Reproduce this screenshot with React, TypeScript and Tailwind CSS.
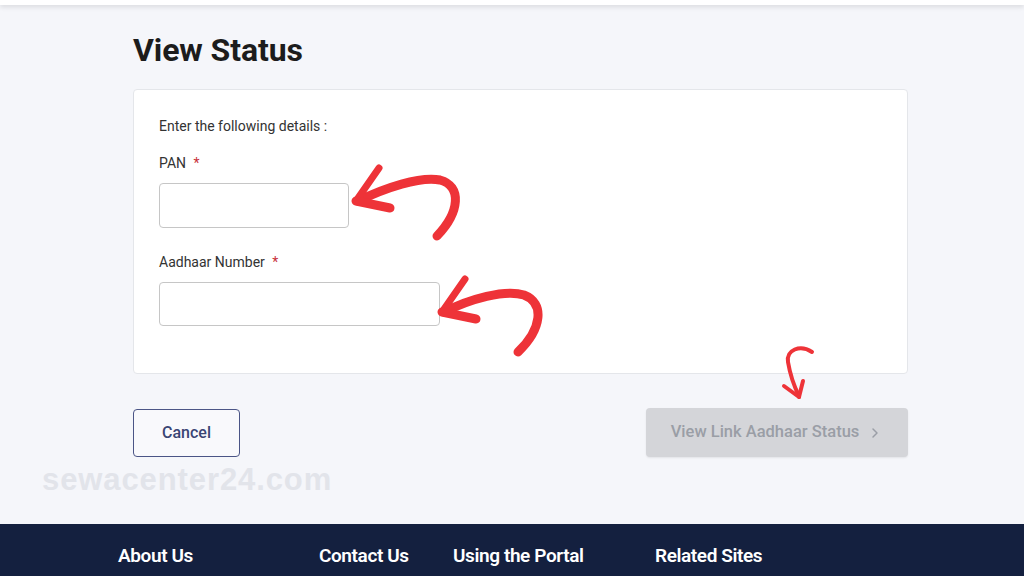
import React from 'react';
import { ChevronRight } from 'lucide-react';

const Field: React.FC<{ label: string; width: string; top: string; height: string }> = ({ label, width, top, height }) => (
  <div className={top}>
    <label className="block text-[14px] leading-5 text-[#333]">
      {label} <span className="ml-1 text-[#c8313a]">*</span>
    </label>
    <input
      type="text"
      className={`mt-[10px] block ${width} ${height} rounded-[4px] border border-[#c6c6c6] bg-white px-3 focus:outline-none`}
    />
  </div>
);

const Arrows: React.FC = () => (
  <svg className="pointer-events-none absolute left-0 top-0" width="1024" height="576" viewBox="0 0 1024 576">
    <g fill="none" stroke="#ee3338" strokeLinecap="round" strokeLinejoin="round">
      {/* PAN arrow */}
      <path d="M358 201 C 385 188, 420 176, 440 180 C 462 186, 460 212, 437 236" strokeWidth="9" />
      <path d="M356 201 L 379 168" strokeWidth="7" />
      <path d="M356 201 L 390 208" strokeWidth="9" />
      {/* Aadhaar arrow */}
      <path d="M444 312 C 470 299, 505 289, 524 295 C 545 303, 542 329, 518 352" strokeWidth="9" />
      <path d="M442 312 L 465 279" strokeWidth="7" />
      <path d="M442 312 L 476 319" strokeWidth="9" />
      {/* Button arrow */}
      <path d="M812 352 C 800 344, 786 350, 788 362 C 790 374, 794 386, 799 396" strokeWidth="4" />
      <path d="M799 397 L 784 386" strokeWidth="4" />
      <path d="M799 397 L 803 381" strokeWidth="4" />
    </g>
  </svg>
);

export default function App() {
  return (
    <div className="relative flex min-h-[576px] w-[1024px] flex-col overflow-hidden bg-[#f5f6fa] font-['Roboto',sans-serif]">
      <div className="h-[5px] bg-white shadow-[0_2px_5px_rgba(0,0,0,0.12)]" />

      <main className="ml-[133px] w-[775px] flex-1">
        <h1 className="mt-[27px] text-[32px] font-bold leading-9 tracking-[-0.1px] text-[#1c1c1c]">View Status</h1>

        <div className="mt-[21px] rounded-[4px] border border-[#e4e6ea] bg-white pb-[47px] pl-[25px] pt-[26px]">
          <p className="text-[14px] leading-5 text-[#333]">Enter the following details :</p>
          <Field label="PAN" width="w-[190px]" top="mt-[17px]" height="h-[45px]" />
          <Field label="Aadhaar Number" width="w-[281px]" top="mt-[24px]" height="h-[44px]" />
        </div>

        <div className="mt-[34px] flex items-start justify-between">
          <button className="mt-px h-[48px] w-[107px] rounded-[4px] border border-[#4b5586] bg-white/40 text-[16px] font-medium text-[#3a4574]">
            Cancel
          </button>
          <button
            disabled
            className="flex h-[49px] w-[262px] items-center justify-center gap-2 rounded-[4px] bg-[#d4d5d9] text-[16.5px] font-medium text-[#9a9ea6] shadow-[0_1px_2px_rgba(0,0,0,0.08)]"
          >
            View Link Aadhaar Status
            <ChevronRight size={16} strokeWidth={2.2} />
          </button>
        </div>
      </main>

      <div className="pointer-events-none absolute left-[42px] top-[462px] font-['Liberation_Sans',sans-serif] text-[31px] font-bold leading-9 tracking-[0.9px] text-[#e2e4ea]">
        sewacenter24.com
      </div>

      <footer className="mt-auto flex h-[52px] items-center bg-[#14203f] pl-[118px] pt-[12px] text-[19px] font-semibold tracking-[-0.4px] text-white">
        <div className="w-[201px]">About Us</div>
        <div className="w-[134px]">Contact Us</div>
        <div className="w-[202px]">Using the Portal</div>
        <div>Related Sites</div>
      </footer>

      <Arrows />
    </div>
  );
}
